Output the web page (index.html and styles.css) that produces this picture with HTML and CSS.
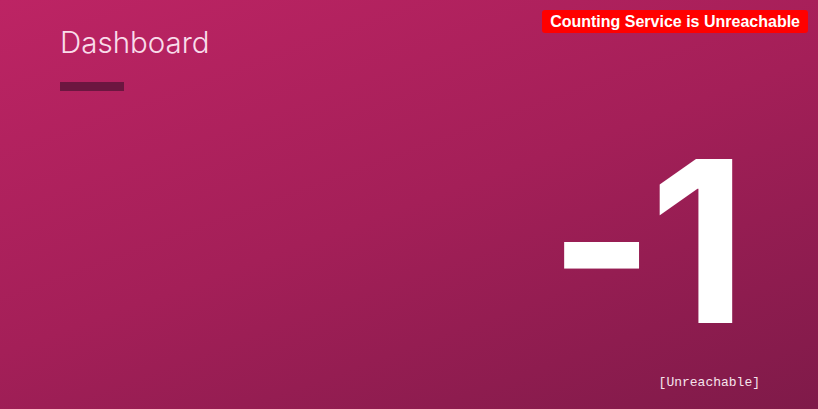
FILE: index.html
```html
<!DOCTYPE html>
<html>
<head>
<meta charset="utf-8">
<link rel="stylesheet" href="styles.css">
</head>
<body>
<div class="page">
  <div class="badge">Counting Service is Unreachable</div>
  <header class="head">
    <h1 class="title">Dashboard</h1>
    <div class="rule"></div>
  </header>
  <section class="counter">
    <div class="count">-1</div>
    <div class="status">[Unreachable]</div>
  </section>
</div>
</body>
</html>
```

FILE: styles.css
```css
html, body {
  margin: 0;
  padding: 0;
}
body {
  width: 818px;
  height: 409px;
  overflow: hidden;
  font-family: "Liberation Sans", Arial, sans-serif;
}
.page {
  position: relative;
  width: 818px;
  height: 409px;
  box-sizing: border-box;
  background: linear-gradient(160deg, #bd2464 0%, #a41f58 50%, #7f1a49 100%);
  display: flex;
  flex-direction: column;
}
.badge {
  position: absolute;
  top: 10px;
  right: 10px;
  background: #ff0000;
  color: #fff;
  font-weight: bold;
  font-size: 16px;
  line-height: 23px;
  padding: 0 8px;
  border-radius: 3px;
}
.head {
  padding: 24px 0 0 60px;
}
.title {
  margin: 0;
  font-weight: 300;
  font-size: 29.5px;
  line-height: 36px;
  color: #f9dcea;
  font-family: Inter, "Liberation Sans", sans-serif;
}
.rule {
  margin-top: 22px;
  width: 64px;
  height: 9px;
  background: #6c1640;
}
.counter {
  display: flex;
  flex-direction: column;
  align-items: flex-end;
  padding-right: 58px;
}
.count {
  font-family: Inter, "Liberation Sans", sans-serif;
  font-weight: 700;
  font-size: 226px;
  line-height: 226px;
  color: #fff;
  margin-top: 37px;
  margin-right: 18px;
  letter-spacing: -5px;
}
.status {
  font-family: "Liberation Mono", "Courier New", monospace;
  font-size: 13px;
  line-height: 16px;
  color: #f6e4ec;
  margin-top: 21px;
}
```
